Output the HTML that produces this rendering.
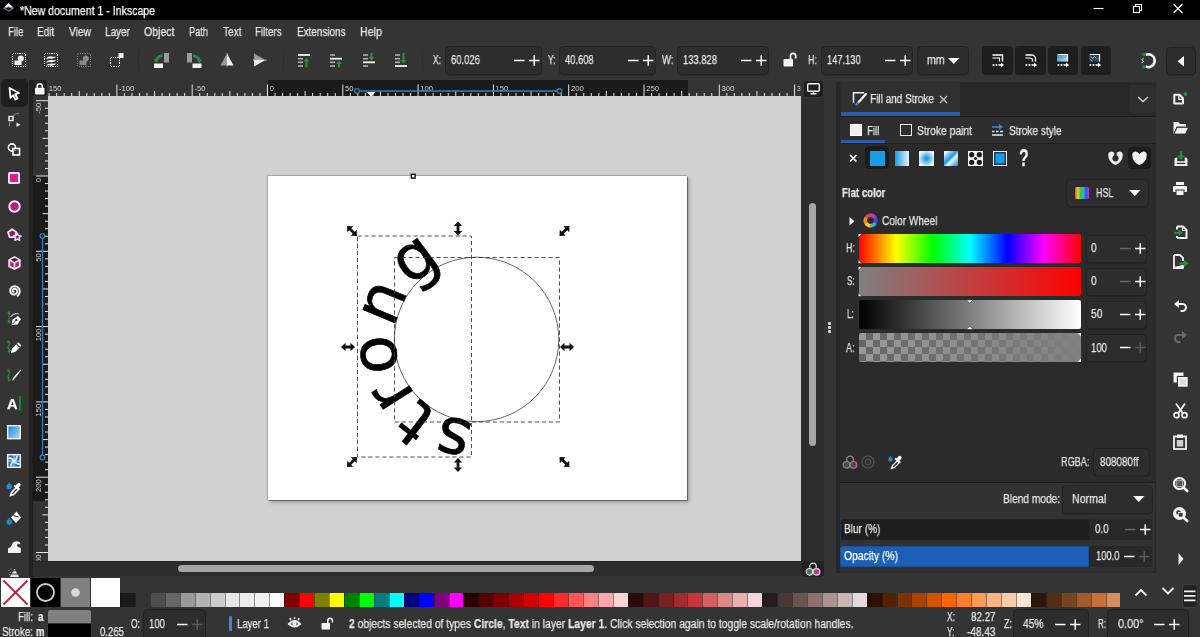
<!DOCTYPE html>
<html><head><meta charset="utf-8"><title>Inkscape</title>
<style>
*{box-sizing:border-box;margin:0;padding:0}
html,body{width:1200px;height:637px;overflow:hidden;background:#343434;font-family:"Liberation Sans",sans-serif;font-size:12px;color:#e8e8e8}
.a{position:absolute}
.t{position:absolute;white-space:nowrap;line-height:14px;font-size:12px;color:#e8e8e8;will-change:transform;-webkit-text-stroke:0.250px}
.box{position:absolute;background:#2d2d2d;border:1px solid #222;border-radius:4.500px;box-shadow:0 1px 0 rgba(0,0,0,.15)}
.dk{position:absolute;background:#1e1e1e;border-radius:4px}
svg{position:absolute;overflow:visible}
b{font-weight:bold}
</style></head><body>

<div class="a" style="left:0;top:0;width:1200px;height:20px;background:#000"></div>
<svg style="left:0px;top:0px" width="18" height="16" viewBox="0 0 18 16" ><path d="M8.500 3.300L14.300 8.300L8.600 11.800L3 8.300Z" fill="#7d7d88"/><path d="M8.500 3.300L12.600 6.800L10.600 7.600L8.500 6.200L6.500 7.600L4.600 6.900Z" fill="#fff"/><path d="M5.500 8.700L8.500 7.300L11.600 8.700L8.600 10.600Z" fill="#14141c"/></svg>
<div class="t" style="left:20.00px;top:3.5px;transform:scaleX(0.8801);transform-origin:0 0;color:#fff;">*New document 1 - Inkscape</div>
<svg style="left:1090px;top:0px" width="100" height="20" viewBox="0 0 100 20" fill="none" stroke="#fff" stroke-width="1.100"><path d="M3.500 8.500h10"/><rect x="43.500" y="6.500" width="6" height="6"/><path d="M45.500 6.500v-2h6v6h-2"/><path d="M83.500 4l9 9M92.500 4l-9 9"/></svg>
<div class="t" style="left:7.50px;top:24.5px;transform:scaleX(0.8010);transform-origin:0 0;">File</div>
<div class="t" style="left:37.00px;top:24.5px;transform:scaleX(0.8357);transform-origin:0 0;">Edit</div>
<div class="t" style="left:68.50px;top:24.5px;transform:scaleX(0.8511);transform-origin:0 0;">View</div>
<div class="t" style="left:104.50px;top:24.5px;transform:scaleX(0.8333);transform-origin:0 0;">Layer</div>
<div class="t" style="left:143.50px;top:24.5px;transform:scaleX(0.8790);transform-origin:0 0;">Object</div>
<div class="t" style="left:188.50px;top:24.5px;transform:scaleX(0.7692);transform-origin:0 0;">Path</div>
<div class="t" style="left:222.50px;top:24.5px;transform:scaleX(0.8409);transform-origin:0 0;">Text</div>
<div class="t" style="left:255.00px;top:24.5px;transform:scaleX(0.8116);transform-origin:0 0;">Filters</div>
<div class="t" style="left:296.50px;top:24.5px;transform:scaleX(0.8262);transform-origin:0 0;">Extensions</div>
<div class="t" style="left:359.50px;top:24.5px;transform:scaleX(0.8907);transform-origin:0 0;">Help</div>
<svg style="left:12px;top:53px" width="14" height="14" viewBox="0 0 14 14" ><rect x="0.5" y="0.5" width="13" height="13" fill="none" stroke="#f2f2f2" stroke-width="1" stroke-dasharray="1.200 1.100" shape-rendering="crispEdges"/><rect x="2.500" y="7.500" width="7" height="4.500" fill="#f2f2f2"/><circle cx="8.800" cy="5.500" r="3" fill="#f2f2f2"/></svg>
<svg style="left:44px;top:53px" width="14" height="14" viewBox="0 0 14 14" ><rect x="0.5" y="0.5" width="13" height="13" fill="none" stroke="#f2f2f2" stroke-width="1" stroke-dasharray="1.200 1.100" shape-rendering="crispEdges"/><path d="M2.500 5 Q5 2.500 8 3.500 T11.500 3 L11.500 4.500 Q9 6 6.500 5.500 T2.500 6.500Z M2.500 8.500 Q5 6.500 8 7 T11.500 6.500 L11.500 8 Q9 9.500 6.500 9 T2.500 10Z M2.500 12 Q5 10 8 10.500 T11.500 10 L11.500 11.500 Q9 13 6.500 12.500 T2.500 12.800Z" fill="#f2f2f2"/></svg>
<svg style="left:77px;top:53px" width="14" height="14" viewBox="0 0 14 14" ><rect x="0.5" y="0.5" width="13" height="13" fill="none" stroke="#7a7a7a" stroke-width="1" stroke-dasharray="1.200 1.100" shape-rendering="crispEdges"/><rect x="2.500" y="7.500" width="7" height="4.500" fill="#8a8a8a"/><circle cx="8.800" cy="5.500" r="3" fill="#8a8a8a"/></svg>
<svg style="left:110px;top:53px" width="14" height="14" viewBox="0 0 14 14" ><rect x="0.5" y="4.5" width="9" height="9" fill="none" stroke="#f2f2f2" stroke-width="1" stroke-dasharray="1.200 1.100" shape-rendering="crispEdges"/><rect x="8.500" y="0" width="5" height="5" fill="#f2f2f2"/></svg>
<svg style="left:153px;top:53px" width="16" height="15" viewBox="0 0 16 15" ><rect x="11" y="0" width="5" height="9.500" fill="#9a9a9a"/><rect x="1" y="10.500" width="9" height="4.500" fill="#f2f2f2"/><path d="M3 8.500 Q3.500 3.500 9.500 2.500" fill="none" stroke="#27903a" stroke-width="2.400"/><path d="M0.500 6.500 L6 6.500 L3 10Z" fill="#27903a"/></svg>
<svg style="left:186px;top:53px" width="16" height="15" viewBox="0 0 16 15" ><rect x="1" y="0" width="5" height="9.500" fill="#9a9a9a"/><rect x="6.500" y="10.500" width="9" height="4.500" fill="#f2f2f2"/><path d="M13.500 8.500 Q13 3.500 7 2.500" fill="none" stroke="#27903a" stroke-width="2.400"/><path d="M16 6.500 L10.500 6.500 L13.500 10Z" fill="#27903a"/></svg>
<svg style="left:220px;top:53px" width="14" height="14" viewBox="0 0 14 14" ><path d="M7 0.500 L0.500 12.500 L7 12.500Z" fill="#9a9a9a"/><path d="M7 0.500 L13.500 12.500 L7 12.500Z" fill="#f2f2f2"/><path d="M7 0v14" stroke="#bbb" stroke-width="1" stroke-dasharray="1.500 1.500"/></svg>
<svg style="left:253px;top:53px" width="14" height="14" viewBox="0 0 14 14" ><path d="M1 0.500 L12.500 7 L1 7Z" fill="#9a9a9a"/><path d="M1 13.500 L12.500 7 L1 7Z" fill="#f2f2f2"/><path d="M0 7h14" stroke="#ccc" stroke-width="1" stroke-dasharray="1.500 1.500"/></svg>
<svg style="left:297.5px;top:53px" width="13" height="15" viewBox="0 0 13 15" ><rect x="0" y="1.1" width="12" height="1.800" fill="#f2f2f2"/><rect x="0" y="4.9" width="5" height="1.600" fill="#b0b0b0"/><rect x="0" y="8.5" width="5" height="1.600" fill="#b0b0b0"/><rect x="0" y="12.2" width="5" height="1.600" fill="#b0b0b0"/><path d="M8.5 14.5V7" stroke="#27903a" stroke-width="2"/><path d="M5.5 8.5L8.5 5L11.5 8.5Z" fill="#27903a"/></svg>
<svg style="left:330px;top:53px" width="13" height="15" viewBox="0 0 13 15" ><rect x="0" y="1.2" width="5" height="1.600" fill="#b0b0b0"/><rect x="0" y="4.8" width="12" height="1.800" fill="#f2f2f2"/><rect x="0" y="8.5" width="5" height="1.600" fill="#b0b0b0"/><rect x="0" y="12.2" width="5" height="1.600" fill="#b0b0b0"/><path d="M9 14.5V9.5" stroke="#27903a" stroke-width="2"/><path d="M6 11.0L9 7.5L12 11.0Z" fill="#27903a"/></svg>
<svg style="left:362.5px;top:53px" width="13" height="15" viewBox="0 0 13 15" ><rect x="0" y="1.2" width="5" height="1.600" fill="#b0b0b0"/><rect x="0" y="4.9" width="5" height="1.600" fill="#b0b0b0"/><rect x="0" y="8.4" width="12" height="1.800" fill="#f2f2f2"/><rect x="0" y="12.2" width="5" height="1.600" fill="#b0b0b0"/><path d="M8.5 0V5.5" stroke="#27903a" stroke-width="2"/><path d="M5.5 4.0L8.5 7.5L11.5 4.0Z" fill="#27903a"/></svg>
<svg style="left:395px;top:53px" width="13" height="15" viewBox="0 0 13 15" ><rect x="0" y="1.2" width="5" height="1.600" fill="#b0b0b0"/><rect x="0" y="4.9" width="5" height="1.600" fill="#b0b0b0"/><rect x="0" y="8.5" width="5" height="1.600" fill="#b0b0b0"/><rect x="0" y="12.1" width="12" height="1.800" fill="#f2f2f2"/><path d="M8.5 0V8.5" stroke="#27903a" stroke-width="2"/><path d="M5.5 7.0L8.5 10.5L11.5 7.0Z" fill="#27903a"/></svg>
<div class="t" style="left:433.00px;top:53px;transform:scaleX(0.7048);transform-origin:0 0;">X:</div>
<div class="box" style="left:445px;top:46px;width:97px;height:29px"></div>
<div class="t" style="left:450.50px;top:53px;transform:scaleX(0.7902);transform-origin:0 0;">60.026</div>
<svg style="left:513.5px;top:55px" width="26" height="11" viewBox="0 0 26 11" ><path d="M0 5.500h10.5" stroke="#fff" stroke-width="1.500"/><path d="M15 5.500h10.5M20.25 0.250v10.5" stroke="#fff" stroke-width="1.500" fill="none"/></svg>
<div class="t" style="left:548.00px;top:53px;transform:scaleX(0.7009);transform-origin:0 0;">Y:</div>
<div class="box" style="left:559px;top:46px;width:97px;height:29px"></div>
<div class="t" style="left:565.00px;top:53px;transform:scaleX(0.7820);transform-origin:0 0;">40.608</div>
<svg style="left:627.5px;top:55px" width="26" height="11" viewBox="0 0 26 11" ><path d="M0 5.500h10.5" stroke="#fff" stroke-width="1.500"/><path d="M15 5.500h10.5M20.25 0.250v10.5" stroke="#fff" stroke-width="1.500" fill="none"/></svg>
<div class="t" style="left:662.00px;top:53px;transform:scaleX(0.7958);transform-origin:0 0;">W:</div>
<div class="box" style="left:677px;top:46px;width:92px;height:29px"></div>
<div class="t" style="left:683.00px;top:53px;transform:scaleX(0.7834);transform-origin:0 0;">133.828</div>
<svg style="left:740.5px;top:55px" width="26" height="11" viewBox="0 0 26 11" ><path d="M0 5.500h10.5" stroke="#fff" stroke-width="1.500"/><path d="M15 5.500h10.5M20.25 0.250v10.5" stroke="#fff" stroke-width="1.500" fill="none"/></svg>
<div class="t" style="left:808.00px;top:53px;transform:scaleX(0.7500);transform-origin:0 0;">H:</div>
<div class="box" style="left:821px;top:46px;width:92px;height:29px"></div>
<div class="t" style="left:827.00px;top:53px;transform:scaleX(0.7765);transform-origin:0 0;">147.130</div>
<svg style="left:884.5px;top:55px" width="26" height="11" viewBox="0 0 26 11" ><path d="M0 5.500h10.5" stroke="#fff" stroke-width="1.500"/><path d="M15 5.500h10.5M20.25 0.250v10.5" stroke="#fff" stroke-width="1.500" fill="none"/></svg>
<svg style="left:783px;top:52px" width="14" height="15" viewBox="0 0 14 15" ><rect x="0.500" y="7" width="9.500" height="7.500" rx="0.800" fill="#f2f2f2"/><path d="M7.500 7V4a2.600 2.600 0 0 1 5.200 0V6.500" fill="none" stroke="#f2f2f2" stroke-width="1.700"/></svg>
<div class="box" style="left:917px;top:46px;width:52px;height:29px"></div>
<div class="t" style="left:927.00px;top:53px;transform:scaleX(0.8750);transform-origin:0 0;">mm</div>
<svg style="left:947.5px;top:57.5px" width="12" height="7" viewBox="0 0 12 7" ><path d="M0 0h11.500l-5.750 6z" fill="#fff"/></svg>
<div class="dk" style="left:982px;top:46px;width:30.500px;height:28.500px"></div>
<div class="dk" style="left:1015px;top:46px;width:30.500px;height:28.500px"></div>
<div class="dk" style="left:1047.5px;top:46px;width:30.500px;height:28.500px"></div>
<div class="dk" style="left:1080.5px;top:46px;width:30.500px;height:28.500px"></div>
<svg style="left:992px;top:54px" width="12" height="14" viewBox="0 0 12 14" ><path d="M0.500 1h10v6.500" fill="none" stroke="#fff" stroke-width="1.400"/><path d="M0.500 4h7v3.500" fill="none" stroke="#fff" stroke-width="1.200"/><circle cx="1.500" cy="11" r="1" fill="#fff"/><circle cx="4.500" cy="11" r="1" fill="#fff"/><path d="M6.500 10.200h2.500v-1.800l3 2.600-3 2.600v-1.800h-2.500z" fill="#fff"/></svg>
<svg style="left:1024.5px;top:54px" width="12" height="14" viewBox="0 0 12 14" ><path d="M0.500 1h6a4 4 0 0 1 4 4v2.500" fill="none" stroke="#fff" stroke-width="1.400"/><path d="M0.500 4h4.500a2.500 2.500 0 0 1 2.500 2.500v1" fill="none" stroke="#fff" stroke-width="1.200"/><circle cx="1.500" cy="11" r="1" fill="#fff"/><circle cx="4.500" cy="11" r="1" fill="#fff"/><path d="M6.500 10.200h2.500v-1.800l3 2.600-3 2.600v-1.800h-2.500z" fill="#fff"/></svg>
<svg style="left:1056.5px;top:54px" width="12" height="14" viewBox="0 0 12 14" ><defs><linearGradient id="tg1" x1="0" y1="0" x2="1" y2="1"><stop offset="0" stop-color="#1a86d8"/><stop offset="1" stop-color="#bfe2f7"/></linearGradient></defs><rect x="0" y="0.500" width="10" height="7" fill="url(#tg1)"/><path d="M1 0.500h9.500v7" fill="none" stroke="#fff" stroke-width="1.200"/><circle cx="1.500" cy="11" r="1" fill="#fff"/><circle cx="4.500" cy="11" r="1" fill="#fff"/><path d="M6.500 10.200h2.500v-1.800l3 2.600-3 2.600v-1.800h-2.500z" fill="#fff"/></svg>
<svg style="left:1089px;top:54px" width="12" height="14" viewBox="0 0 12 14" ><rect x="0" y="0.500" width="10" height="7" fill="#274a66"/><path d="M1.500 2.500l2 2 2-2 2 2M1.500 5.500l2 2" stroke="#9cc4e0" stroke-width="0.900" fill="none"/><path d="M1 0.500h9.500v7" fill="none" stroke="#fff" stroke-width="1.200"/><circle cx="1.500" cy="11" r="1" fill="#fff"/><circle cx="4.500" cy="11" r="1" fill="#fff"/><path d="M6.500 10.200h2.500v-1.800l3 2.600-3 2.600v-1.800h-2.500z" fill="#fff"/></svg>
<svg style="left:1140px;top:53px" width="17" height="16" viewBox="0 0 17 16" ><path d="M5.600 1.900A6.400 6.400 0 1 1 5.600 13.500" fill="none" stroke="#fff" stroke-width="2.500"/><circle cx="3.600" cy="1.600" r="1.800" fill="#218231"/><circle cx="3.600" cy="13.900" r="1.800" fill="#218231"/><path d="M3.600 6c-1.800-.4-2.200 1.300-.9 1.700s.8 2-1.100 1.500" fill="none" stroke="#fff" stroke-width="1"/></svg>
<div class="box" style="left:1165.500px;top:46.500px;width:30.500px;height:28px"></div>
<svg style="left:1177px;top:55.5px" width="8" height="11" viewBox="0 0 8 11" ><path d="M7 0v10.500l-6.500-5.250z" fill="#fff"/></svg>
<div class="a" style="left:138px;top:50px;width:1px;height:21px;background:#2e2e2e"></div>
<div class="a" style="left:282.5px;top:50px;width:1px;height:21px;background:#2e2e2e"></div>
<div class="a" style="left:421.5px;top:50px;width:1px;height:21px;background:#2e2e2e"></div>
<div class="a" style="left:1px;top:79px;width:26.500px;height:27.500px;background:#1e1e1e;border-radius:5px"></div>
<div class="a" style="left:29px;top:79.500px;width:4.500px;height:497.500px;background:#202020"></div>
<svg style="left:8px;top:87px" width="13" height="14" viewBox="0 0 13 14" ><path d="M1.500 1 L11 6 L7.200 7.300 L9.500 11.500 L7.300 12.500 L5.200 8.300 L2.500 10.800Z" fill="#1d1d1d" stroke="#fff" stroke-width="1.800" stroke-linejoin="round"/></svg>
<svg style="left:7px;top:111px" width="14" height="18" viewBox="0 0 14 18" ><rect x="2" y="5.500" width="4" height="4" fill="none" stroke="#fff" stroke-width="1.400"/><path d="M6.500 4.500Q9 2 12 2.500" fill="none" stroke="#aaa" stroke-width="0.800"/><path d="M3 10.500Q2 13 2.500 15.500" fill="none" stroke="#aaa" stroke-width="0.800"/><path d="M9.500 11.500l4 2.300-4 2.300z" fill="#fff"/></svg>
<svg style="left:7px;top:143px" width="14" height="13" viewBox="0 0 14 13" ><circle cx="5" cy="4.500" r="3.600" fill="none" stroke="#fff" stroke-width="1.600"/><rect x="6" y="5.500" width="6.500" height="6.500" fill="#343434" stroke="#fff" stroke-width="1.600"/><path d="M5 4.500l3.500 3.500" stroke="#ccc" stroke-width="1"/></svg>
<svg style="left:8px;top:172px" width="12" height="12" viewBox="0 0 12 12" ><rect x="1" y="1" width="10" height="10" rx="0.800" fill="#e8198b" stroke="#fbe8f2" stroke-width="2"/></svg>
<svg style="left:7.5px;top:199.5px" width="13" height="13" viewBox="0 0 13 13" ><circle cx="6.500" cy="6.500" r="5.200" fill="#c01a78" stroke="#fbe8f2" stroke-width="2"/></svg>
<svg style="left:7px;top:228px" width="15" height="14" viewBox="0 0 15 14" ><path d="M5.200 1.200l4.200 3-1.600 4.900H2.600L1 4.200z" fill="#8e1c60" stroke="#f6e4ee" stroke-width="1.800" stroke-linejoin="round"/><path d="M10.300 5.200l1.100 2.300 2.600.4-1.900 1.800.5 2.600-2.300-1.200-2.300 1.200.5-2.600-1.900-1.800 2.600-.4z" fill="#8e1c60" stroke="#f6e4ee" stroke-width="1.500" stroke-linejoin="round"/></svg>
<svg style="left:7.5px;top:256px" width="13" height="14" viewBox="0 0 13 14" ><path d="M6.500 1.200L11.800 4v6.300L6.500 13 1.200 10.300V4z" fill="#c01a7a" stroke="#f6e4ee" stroke-width="1.900" stroke-linejoin="round"/><path d="M6.500 1.800L11 4.200 6.500 6.800 2 4.200z" fill="#5e1a4c"/><path d="M1.200 4l5.300 2.900L11.800 4M6.500 6.900V13" fill="none" stroke="#f6e4ee" stroke-width="1.600"/></svg>
<svg style="left:7.5px;top:284.5px" width="13" height="13" viewBox="0 0 13 13" ><path d="M5.58 6.96 L5.35 6.86 L5.14 6.71 L4.96 6.50 L4.82 6.26 L4.72 5.97 L4.68 5.66 L4.70 5.33 L4.79 5.00 L4.95 4.68 L5.17 4.39 L5.46 4.14 L5.81 3.94 L6.20 3.81 L6.62 3.75 L7.07 3.78 L7.51 3.89 L7.93 4.10 L8.32 4.39 L8.65 4.76 L8.91 5.20 L9.09 5.70 L9.18 6.23 L9.16 6.79 L9.03 7.34 L8.79 7.88 L8.45 8.37 L8.00 8.79 L7.48 9.13 L6.88 9.37 L6.24 9.50 L5.57 9.50 L4.90 9.37 L4.25 9.11 L3.65 8.73 L3.12 8.23 L2.69 7.62 L2.37 6.94 L2.19 6.19 L2.15 5.40 L2.27 4.61 L2.53 3.84 L2.94 3.12 L3.49 2.49 L4.17 1.95 L4.94 1.55 L5.79 1.30 L6.69 1.21 L7.60 1.30 L8.49 1.55 L9.33 1.98 L10.09 2.57 L10.73 3.30 L11.23 4.15 L11.56 5.09 L11.72 6.09 L11.68 7.12 L11.44 8.14 L11.01 9.11 L10.40 9.99 L9.63 10.75" fill="none" stroke="#f4f4f4" stroke-width="1.900" stroke-linecap="round" stroke-linejoin="round"/></svg>
<svg style="left:6px;top:311px" width="16" height="15" viewBox="0 0 16 15" ><path d="M3 1.500v8.500" stroke="#27903a" stroke-width="1" fill="none"/><circle cx="3" cy="2" r="1.400" fill="#27903a"/><circle cx="3" cy="10.500" r="1.400" fill="#27903a"/><path d="M4.500 6Q8 1.500 13 3" fill="none" stroke="#bbb" stroke-width="1.200"/><path d="M5.500 14l1-5.500 5.500-3.500 3 3-3.500 5.500z" fill="#fff"/><path d="M6 13.500l4-4" stroke="#343434" stroke-width="1"/><circle cx="10.300" cy="9.200" r="1.100" fill="#343434"/></svg>
<svg style="left:6px;top:340px" width="16" height="15" viewBox="0 0 16 15" ><path d="M2 1.500q3 1 1 3.500t0 4.500 3 1" fill="none" stroke="#27903a" stroke-width="1.100"/><circle cx="2.500" cy="1.800" r="1.300" fill="#27903a"/><circle cx="3" cy="11.500" r="1.300" fill="#27903a"/><path d="M4.800 13l1.200-4.300 6.300-6.500 3.200 3.200-6.300 6.500z" fill="#fff"/><path d="M10.500 4l3.200 3.200" stroke="#343434" stroke-width="1.100"/></svg>
<svg style="left:6px;top:368px" width="16" height="15" viewBox="0 0 16 15" ><path d="M2 2.500q3 1 1 3.500t0 4.500" fill="none" stroke="#27903a" stroke-width="1.100"/><circle cx="2.500" cy="2.500" r="1.200" fill="#27903a"/><circle cx="3" cy="12" r="1.300" fill="#27903a"/><path d="M6 13l1.200-3.200 7.300-8.300.8.800-7 8.600z" fill="#fff"/></svg>
<div class="t" style="left:7.00px;top:397.3px;transform:scaleX(1.0495);transform-origin:0 0;font-size:14px;color:#fff;"><b>A</b></div>
<div class="a" style="left:19px;top:395.500px;width:2.200px;height:15px;background:#218231"></div>
<svg style="left:7px;top:425px" width="14" height="15" viewBox="0 0 14 15" ><defs><linearGradient id="lg1" x1="0" y1="0" x2="1" y2="1"><stop offset="0" stop-color="#1583d6"/><stop offset="1" stop-color="#b5dcf5"/></linearGradient></defs><rect x="0.700" y="0.700" width="12.600" height="13" fill="url(#lg1)" stroke="#f0f0f0" stroke-width="1.400"/></svg>
<svg style="left:7px;top:453.5px" width="14" height="14" viewBox="0 0 14 14" ><rect x="0.700" y="0.700" width="12.600" height="12.600" fill="#1d6db3" stroke="#f0f0f0" stroke-width="1.500"/><path d="M7 7Q4 3 1.500 4.500M7 7Q11 4 9.500 1.500M7 7Q10 11 12.500 9.500M7 7Q3 10 4.500 12.500" stroke="#d6ecfa" stroke-width="1.900" fill="none"/><path d="M7 1v12M1 7h12" stroke="#e8f4fc" stroke-width="0.900"/></svg>
<svg style="left:6px;top:481px" width="16" height="16" viewBox="0 0 16 16" ><circle cx="3.300" cy="5.500" r="2.700" fill="#1e8ad6"/><path d="M3.300 1l2 3.500h-4z" fill="#1e8ad6"/><path d="M4.500 14.500l1-3 5.500-5.500 2 2-5.500 5.500z" fill="none" stroke="#fff" stroke-width="1.600"/><path d="M9.500 4.500l2-2a1.800 1.800 0 0 1 2.600 2.600l-2 2 .8.800-1.200 1.200-4.200-4.200 1.200-1.200z" fill="#fff"/></svg>
<svg style="left:6px;top:510px" width="16" height="15" viewBox="0 0 16 15" ><circle cx="3.200" cy="12" r="2.700" fill="#1e8ad6"/><path d="M3.200 7.500l2 3.500h-4z" fill="#1e8ad6"/><path d="M5 7.500l5.500-6 4.500 6-5 5.500z" fill="#fff"/><path d="M7.500 5.500l5 1.500" stroke="#343434" stroke-width="1.200"/></svg>
<svg style="left:7.5px;top:540.5px" width="13" height="12" viewBox="0 0 13 12" ><path d="M0 12V7.200c2.800-.2 3.300-2.400 4.500-4.700C5.600.6 8.500-.4 10.800.8c1.200.6 1.700 1.700 1.800 2.800-1-1-2.600-1-3.300 0-.6.900-.1 2 .8 2.400.9.500 1.900.4 2.700.9V12z" fill="#f2f2f2"/></svg>
<svg style="left:8px;top:568px" width="13" height="9" viewBox="0 0 13 9" ><path d="M2 9L3 6.500h7L11 9z" fill="#eee"/><path d="M4 5.500l1-2h3l1 2z" fill="#eee"/><path d="M5.500 2.500l.5-1.500h1l.5 1.500z" fill="#eee"/><circle cx="1" cy="2.500" r=".6" fill="#aaa"/><circle cx="2.500" cy="4.500" r=".6" fill="#aaa"/><circle cx="1.500" cy="6.500" r=".6" fill="#aaa"/><circle cx="3" cy="1" r=".6" fill="#aaa"/></svg>
<div class="a" style="left:33px;top:79.500px;width:768px;height:16.500px;background:#343434"></div>
<div class="a" style="left:31px;top:79.500px;width:16px;height:16.500px;background:#222;border-radius:3px"></div>
<div class="a" style="left:267.500px;top:79.500px;width:420px;height:16.500px;background:#1a1a1a"></div>
<div class="a" style="left:33px;top:96px;width:15px;height:465px;background:#343434"></div>
<div class="a" style="left:33px;top:176px;width:15px;height:324.500px;background:#1a1a1a"></div>
<svg style="left:34.5px;top:82.5px" width="10" height="12" viewBox="0 0 10 12" ><rect x="0" y="4.800" width="9.500" height="6.700" rx="0.800" fill="#f4f4f4"/><path d="M2.200 5V3.300a2.550 2.550 0 0 1 5.100 0V5" fill="none" stroke="#f4f4f4" stroke-width="1.600"/></svg>
<svg style="left:0px;top:0px" width="1200" height="637" viewBox="0 0 1200 637" ><path d="M49.13 93V96M56.66 93V96M64.19 93V96M71.72 93V96M79.25 91V96M86.78 93V96M94.31 93V96M101.84 93V96M109.37 93V96M116.90 84.500V96M124.43 93V96M131.96 93V96M139.49 93V96M147.02 93V96M154.55 91V96M162.08 93V96M169.61 93V96M177.14 93V96M184.67 93V96M192.20 84.500V96M199.73 93V96M207.26 93V96M214.79 93V96M222.32 93V96M229.85 91V96M237.38 93V96M244.91 93V96M252.44 93V96M259.97 93V96M267.50 84.500V96M275.03 93V96M282.56 93V96M290.09 93V96M297.62 93V96M305.15 91V96M312.68 93V96M320.21 93V96M327.74 93V96M335.27 93V96M342.80 84.500V96M350.33 93V96M357.86 93V96M365.39 93V96M372.92 93V96M380.45 91V96M387.98 93V96M395.51 93V96M403.04 93V96M410.57 93V96M418.10 84.500V96M425.63 93V96M433.16 93V96M440.69 93V96M448.22 93V96M455.75 91V96M463.28 93V96M470.81 93V96M478.34 93V96M485.87 93V96M493.40 84.500V96M500.93 93V96M508.46 93V96M515.99 93V96M523.52 93V96M531.05 91V96M538.58 93V96M546.11 93V96M553.64 93V96M561.17 93V96M568.70 84.500V96M576.23 93V96M583.76 93V96M591.29 93V96M598.82 93V96M606.35 91V96M613.88 93V96M621.41 93V96M628.94 93V96M636.47 93V96M644.00 84.500V96M651.53 93V96M659.06 93V96M666.59 93V96M674.12 93V96M681.65 91V96M689.18 93V96M696.71 93V96M704.24 93V96M711.77 93V96M719.30 84.500V96M726.83 93V96M734.36 93V96M741.89 93V96M749.42 93V96M756.95 91V96M764.48 93V96M772.01 93V96M779.54 93V96M787.07 93V96M794.60 84.500V96" stroke="#e6e6e6" stroke-width="1" fill="none"/><clipPath id="hrc"><rect x="48" y="80" width="752.500" height="16"/></clipPath><g clip-path="url(#hrc)" font-family="Liberation Sans, sans-serif" font-size="8" fill="#d6d6d6"><text x="119.10" y="91.300" textLength="15.2" lengthAdjust="spacingAndGlyphs">-100</text><text x="194.40" y="91.300" textLength="11.0" lengthAdjust="spacingAndGlyphs">-50</text><text x="269.70" y="91.300" textLength="4.2" lengthAdjust="spacingAndGlyphs">0</text><text x="345.00" y="91.300" textLength="8.5" lengthAdjust="spacingAndGlyphs">50</text><text x="420.30" y="91.300" textLength="12.8" lengthAdjust="spacingAndGlyphs">100</text><text x="495.60" y="91.300" textLength="12.8" lengthAdjust="spacingAndGlyphs">150</text><text x="570.90" y="91.300" textLength="12.8" lengthAdjust="spacingAndGlyphs">200</text><text x="646.20" y="91.300" textLength="12.8" lengthAdjust="spacingAndGlyphs">250</text><text x="721.50" y="91.300" textLength="12.8" lengthAdjust="spacingAndGlyphs">300</text><text x="796.80" y="91.300" textLength="12.8" lengthAdjust="spacingAndGlyphs">350</text><text x="48.800" y="91.300" textLength="12.7" lengthAdjust="spacingAndGlyphs">150</text></g></svg>
<svg style="left:0px;top:0px" width="1200" height="637" viewBox="0 0 1200 637" ><path d="M36 100.70H48M45 108.23H48M45 115.76H48M45 123.29H48M45 130.82H48M42.500 138.35H48M45 145.88H48M45 153.41H48M45 160.94H48M45 168.47H48M36 176.00H48M45 183.53H48M45 191.06H48M45 198.59H48M45 206.12H48M42.500 213.65H48M45 221.18H48M45 228.71H48M45 236.24H48M45 243.77H48M36 251.30H48M45 258.83H48M45 266.36H48M45 273.89H48M45 281.42H48M42.500 288.95H48M45 296.48H48M45 304.01H48M45 311.54H48M45 319.07H48M36 326.60H48M45 334.13H48M45 341.66H48M45 349.19H48M45 356.72H48M42.500 364.25H48M45 371.78H48M45 379.31H48M45 386.84H48M45 394.37H48M36 401.90H48M45 409.43H48M45 416.96H48M45 424.49H48M45 432.02H48M42.500 439.55H48M45 447.08H48M45 454.61H48M45 462.14H48M45 469.67H48M36 477.20H48M45 484.73H48M45 492.26H48M45 499.79H48M45 507.32H48M42.500 514.85H48M45 522.38H48M45 529.91H48M45 537.44H48M45 544.97H48M36 552.50H48" stroke="#e6e6e6" stroke-width="1" fill="none"/><clipPath id="vrc"><rect x="33" y="96" width="15" height="464.500"/></clipPath><g clip-path="url(#vrc)" font-family="Liberation Sans, sans-serif" font-size="8" fill="#d6d6d6"><text transform="translate(40.800 113.70) rotate(-90)" textLength="11.0" lengthAdjust="spacingAndGlyphs">-50</text><text transform="translate(40.800 182.25) rotate(-90)" textLength="4.2" lengthAdjust="spacingAndGlyphs">0</text><text transform="translate(40.800 261.80) rotate(-90)" textLength="8.5" lengthAdjust="spacingAndGlyphs">50</text><text transform="translate(40.800 341.35) rotate(-90)" textLength="12.8" lengthAdjust="spacingAndGlyphs">100</text><text transform="translate(40.800 416.65) rotate(-90)" textLength="12.8" lengthAdjust="spacingAndGlyphs">150</text><text transform="translate(40.800 491.95) rotate(-90)" textLength="12.8" lengthAdjust="spacingAndGlyphs">200</text><text transform="translate(40.800 567.25) rotate(-90)" textLength="12.8" lengthAdjust="spacingAndGlyphs">250</text></g></svg>
<svg style="left:0px;top:0px" width="1200" height="637" viewBox="0 0 1200 637" ><path d="M359.500 91H557" stroke="#3280bb" stroke-width="1.300"/><circle cx="357" cy="91" r="2.300" fill="#1a1a1a" stroke="#3280bb" stroke-width="1.300"/><circle cx="559.500" cy="91" r="2.300" fill="#1a1a1a" stroke="#3280bb" stroke-width="1.300"/><path d="M366.500 92h9l-4.500 4.500z" fill="#fff"/></svg>
<svg style="left:0px;top:0px" width="1200" height="637" viewBox="0 0 1200 637" ><path d="M42.500 238V455.500" stroke="#3280bb" stroke-width="1.300"/><circle cx="42.500" cy="236" r="2.300" fill="#1a1a1a" stroke="#3280bb" stroke-width="1.300"/><circle cx="42.500" cy="457.500" r="2.300" fill="#1a1a1a" stroke="#3280bb" stroke-width="1.300"/></svg>
<div class="a" style="left:48px;top:96px;width:753px;height:465px;background:#d1d1d1"></div>
<div class="a" style="left:268px;top:176px;width:419px;height:323.800px;background:#fff;box-shadow:0.800px 0.800px 0 rgba(70,70,70,.85),-0.700px -0.700px 0 rgba(130,130,130,.7),2px 2px 4px rgba(0,0,0,.3)"></div>
<svg style="left:0px;top:0px" width="1200" height="637" viewBox="0 0 1200 637" ><circle cx="476.6" cy="339.4" r="82.2" fill="none" stroke="#222" stroke-width="0.700"/><path id="cp" d="M474.45 421.57A82.2 82.2 0 0 1 478.75 257.23A82.2 82.2 0 0 1 474.45 421.57" fill="none"/><text font-family="DejaVu Sans, sans-serif" font-size="63.500" letter-spacing="3.700" fill="#000" stroke="#000" stroke-width="0.700"><textPath href="#cp" startOffset="0">strong</textPath></text><g fill="none" stroke="#3a3a55" stroke-width="0.900" stroke-dasharray="4.200 2.800"><rect x="357.500" y="236" width="114" height="221"/><rect x="394.500" y="257.500" width="165" height="164.500"/></g><g transform="translate(352 231) rotate(45)"><path d="M-7 0l4.500-4.200v2.800h5v-2.800l4.500 4.200-4.500 4.200v-2.800h-5v2.800z" fill="#111"/></g><g transform="translate(564.5 231) rotate(-45)"><path d="M-7 0l4.500-4.200v2.800h5v-2.800l4.500 4.200-4.500 4.200v-2.800h-5v2.800z" fill="#111"/></g><g transform="translate(352 462) rotate(-45)"><path d="M-7 0l4.500-4.200v2.800h5v-2.800l4.500 4.200-4.500 4.200v-2.800h-5v2.800z" fill="#111"/></g><g transform="translate(564.5 462) rotate(45)"><path d="M-7 0l4.500-4.200v2.800h5v-2.800l4.500 4.200-4.500 4.200v-2.800h-5v2.800z" fill="#111"/></g><g transform="translate(458 228.5) rotate(90)"><path d="M-7 0l4.500-4.200v2.800h5v-2.800l4.500 4.200-4.500 4.200v-2.800h-5v2.800z" fill="#111"/></g><g transform="translate(458 465) rotate(90)"><path d="M-7 0l4.500-4.200v2.800h5v-2.800l4.500 4.200-4.500 4.200v-2.800h-5v2.800z" fill="#111"/></g><g transform="translate(348 347) rotate(0)"><path d="M-7 0l4.500-4.200v2.800h5v-2.800l4.500 4.200-4.500 4.200v-2.800h-5v2.800z" fill="#111"/></g><g transform="translate(567 347) rotate(0)"><path d="M-7 0l4.500-4.200v2.800h5v-2.800l4.500 4.200-4.500 4.200v-2.800h-5v2.800z" fill="#111"/></g><rect x="411.300" y="174.300" width="3.800" height="3.800" fill="#fff" stroke="#111" stroke-width="1.400"/></svg>
<div class="a" style="left:801px;top:96px;width:22.500px;height:480px;background:#2d2d2d"></div>
<div class="a" style="left:33px;top:560.500px;width:790.500px;height:15.500px;background:#2d2d2d;border-top:1px solid #222"></div>
<div class="a" style="left:809px;top:203px;width:7px;height:243px;background:#a6a6a6;border-radius:3.500px"></div>
<div class="a" style="left:178px;top:565px;width:416px;height:7px;background:#a6a6a6;border-radius:3.500px"></div>
<div class="a" style="left:802.500px;top:80px;width:21px;height:18px;background:#1f1f1f;border:1px solid #383838;border-radius:4px"></div>
<svg style="left:806.5px;top:83px" width="13" height="12" viewBox="0 0 13 12" ><rect x="0.700" y="0.700" width="11.600" height="7.600" rx="1" fill="none" stroke="#f0f0f0" stroke-width="1.400"/><path d="M6.500 8.500v1.500M3.500 10.800h6" stroke="#f0f0f0" stroke-width="1.400"/></svg>
<div class="a" style="left:828px;top:322px;width:2.500px;height:2.500px;background:#ddd;border-radius:50%"></div>
<div class="a" style="left:828px;top:326px;width:2.500px;height:2.500px;background:#ddd;border-radius:50%"></div>
<div class="a" style="left:828px;top:330.2px;width:2.500px;height:2.500px;background:#ddd;border-radius:50%"></div>
<div class="a" style="left:801.500px;top:560.500px;width:22px;height:16px;background:#222;border-radius:4px"></div>
<svg style="left:804.5px;top:562px" width="16" height="14" viewBox="0 0 16 14" ><g opacity="1.0"><circle cx="8" cy="4.500" r="3.300" fill="none" stroke="#ddd" stroke-width="1.200"/><circle cx="4.500" cy="9.800" r="3.300" fill="#2f8a3c" stroke="#ddd" stroke-width="1.200"/><circle cx="11.500" cy="9.800" r="3.300" fill="#c2357f" stroke="#ddd" stroke-width="1.200"/></g></svg>
<div class="a" style="left:836px;top:82px;width:320px;height:491px;background:#2b2b2b"></div>
<div class="a" style="left:836px;top:82px;width:4px;height:491px;background:#262626"></div>
<div class="a" style="left:841px;top:83px;width:119px;height:29px;background:#303030"></div>
<div class="a" style="left:841px;top:112px;width:119px;height:3.500px;background:#2a5da8"></div>
<div class="a" style="left:840px;top:116px;width:316px;height:1px;background:#1c1c1c"></div>
<svg style="left:852px;top:92px" width="15" height="15" viewBox="0 0 15 15" ><path d="M1.500 10.700V0.800h10.500" fill="none" stroke="#f0f0f0" stroke-width="1.500"/><path d="M13.800 2l-6 7" stroke="#f4f4f4" stroke-width="2.300" stroke-linecap="round"/><path d="M6.800 9.800l-2.300 2.600" stroke="#3c8ed0" stroke-width="2.300" stroke-linecap="round"/><circle cx="6.900" cy="9.700" r="1.100" fill="#fff"/></svg>
<div class="t" style="left:869.50px;top:91.5px;transform:scaleX(0.8344);transform-origin:0 0;">Fill and Stroke</div>
<svg style="left:938.5px;top:95px" width="9" height="9" viewBox="0 0 9 9" ><path d="M1 1l7 7M8 1l-7 7" stroke="#bdbdbd" stroke-width="1.400"/></svg>
<div class="a" style="left:960px;top:83px;width:196px;height:33px;background:#282828"></div>
<div class="a" style="left:1130px;top:85px;width:25.500px;height:28px;background:#2f2f2f;border-radius:4px"></div>
<svg style="left:1137px;top:96px" width="12" height="7" viewBox="0 0 12 7" ><path d="M1 1l5 4.500 5-4.500" fill="none" stroke="#cfcfcf" stroke-width="1.500"/></svg>
<div class="a" style="left:840px;top:117px;width:316px;height:26px;background:#2e2e2e"></div>
<div class="a" style="left:841px;top:139.500px;width:44px;height:3.500px;background:#2a5da8"></div>
<div class="a" style="left:840px;top:143px;width:316px;height:1px;background:#1f1f1f"></div>
<div class="a" style="left:850px;top:124px;width:11.500px;height:12px;background:#efefef;border:1px solid #fff"></div>
<div class="t" style="left:867.00px;top:123.5px;transform:scaleX(0.8013);transform-origin:0 0;">Fill</div>
<div class="a" style="left:900px;top:124px;width:11.500px;height:12px;border:1.500px solid #e8e8e8"></div>
<div class="t" style="left:917.00px;top:123.5px;transform:scaleX(0.8587);transform-origin:0 0;">Stroke paint</div>
<svg style="left:992px;top:124px" width="12" height="12" viewBox="0 0 12 12" ><path d="M0 3h8" stroke="#3c8ed0" stroke-width="1.500"/><path d="M7 0l4 3-4 3z" fill="#3c8ed0"/><path d="M0 7.500h2.500M4 7.500h2.500M8 7.500h3" stroke="#ddd" stroke-width="1.400"/><path d="M0 11h11" stroke="#ddd" stroke-width="1.600"/></svg>
<div class="t" style="left:1008.70px;top:123.5px;transform:scaleX(0.8389);transform-origin:0 0;">Stroke style</div>
<svg style="left:848.5px;top:153.5px" width="9" height="9" viewBox="0 0 9 9" ><path d="M1 1l6.500 6.500M7.500 1l-6.500 6.500" stroke="#eee" stroke-width="1.700"/></svg>
<div class="a" style="left:865px;top:146px;width:23.500px;height:22.500px;background:#1b1b1b;border-radius:4px"></div>
<div class="a" style="left:870px;top:151px;width:14.500px;height:14.500px;background:#1a9be6"></div>
<div class="a" style="left:894.500px;top:151px;width:14.500px;height:14.500px;background:linear-gradient(90deg,#1a9be6,#e6f4fd)"></div>
<div class="a" style="left:919px;top:151px;width:14.500px;height:14.500px;background:radial-gradient(circle,#1a9be6 10%,#e6f4fd 75%)"></div>
<div class="a" style="left:943.500px;top:151px;width:14.500px;height:14.500px;background:linear-gradient(135deg,#e6f4fd 10%,#1a9be6 45%,#e6f4fd 60%,#1a9be6 95%)"></div>
<svg style="left:968px;top:151px" width="15" height="15" viewBox="0 0 15 15" ><rect width="15" height="15" fill="#f4f4f4"/><g fill="#1b1b1b"><circle cx="3.700" cy="3.700" r="2.600"/><circle cx="11.300" cy="3.700" r="2.600"/><circle cx="3.700" cy="11.300" r="2.600"/><circle cx="11.300" cy="11.300" r="2.600"/><circle cx="7.500" cy="7.500" r="1.600"/></g></svg>
<div class="a" style="left:992.500px;top:151px;width:14.500px;height:14.500px;background:#1a9be6;border:1.500px solid #f0f0f0;box-shadow:inset 0 0 0 1.500px #1b3a57"></div>
<div class="t" style="left:1018.70px;top:151px;transform:scaleX(0.6553);transform-origin:0 0;font-size:24px;color:#f2f2f2;"><b>?</b></div>
<svg style="left:1107.5px;top:151px" width="15" height="15" viewBox="0 0 15 15" ><path d="M7.500 14C3 12.500 0 8.500 0.300 3.500 0.500 0.800 3.500-.3 5.500 1.200L7.500 3l2-1.800C11.500-.3 14.500.8 14.700 3.500 15 8.500 12 12.500 7.500 14z" fill="#efefef"/><circle cx="7.500" cy="7.300" r="3.100" fill="#2b2b2b"/><path d="M6.300 1.500h2.400v3.500h-2.400z" fill="#2b2b2b"/></svg>
<div class="a" style="left:1127.500px;top:146.500px;width:23.500px;height:22.500px;background:#1b1b1b;border-radius:4px"></div>
<svg style="left:1132px;top:151px" width="15" height="15" viewBox="0 0 15 15" ><path d="M7.500 14C3 12.500 0 8.500 0.300 3.500 0.500 0.800 3.500-.3 5.500 1.200L7.500 3l2-1.800C11.500-.3 14.500.8 14.700 3.500 15 8.500 12 12.500 7.500 14z" fill="#efefef"/></svg>
<div class="t" style="left:842.30px;top:186px;transform:scaleX(0.8037);transform-origin:0 0;"><b>Flat color</b></div>
<div class="box" style="left:1065.500px;top:179px;width:83.500px;height:28px"></div>
<svg style="left:1075px;top:187px" width="14" height="12" viewBox="0 0 14 12" ><defs><linearGradient id="rb" x1="0" x2="1"><stop offset="0" stop-color="#e8452e"/><stop offset=".2" stop-color="#f2d21c"/><stop offset=".4" stop-color="#3fc23a"/><stop offset=".6" stop-color="#22b8e0"/><stop offset=".8" stop-color="#3a48e0"/><stop offset="1" stop-color="#d236d8"/></linearGradient></defs><rect width="14" height="12" rx="1.500" fill="url(#rb)"/></svg>
<div class="t" style="left:1095.50px;top:186.3px;transform:scaleX(0.7495);transform-origin:0 0;">HSL</div>
<svg style="left:1129px;top:190px" width="12" height="7" viewBox="0 0 12 7" ><path d="M0 0h11.500l-5.750 6z" fill="#fff"/></svg>
<svg style="left:849px;top:216.5px" width="6" height="9" viewBox="0 0 6 9" ><path d="M0.500 0l5 4.300-5 4.300z" fill="#f2f2f2"/></svg>
<svg style="left:862.5px;top:213px" width="15" height="15" viewBox="0 0 15 15" ><circle cx="7.500" cy="7.500" r="5.200" fill="none" stroke="#e8452e" stroke-width="3.400"/><path d="M7.500 2.300a5.200 5.200 0 0 1 4.500 2.600" fill="none" stroke="#c236c8" stroke-width="3.400"/><path d="M12 4.900a5.200 5.200 0 0 1 0 5.200" fill="none" stroke="#3a48e0" stroke-width="3.400"/><path d="M12 10.100a5.200 5.200 0 0 1-4.500 2.600" fill="none" stroke="#22b8e0" stroke-width="3.400"/><path d="M7.500 12.700a5.200 5.200 0 0 1-4.500-2.600" fill="none" stroke="#f2d21c" stroke-width="3.400"/><path d="M3 10.100a5.200 5.200 0 0 1 0-5.200" fill="none" stroke="#f28a1c" stroke-width="3.400"/></svg>
<div class="t" style="left:882.30px;top:214px;transform:scaleX(0.8388);transform-origin:0 0;">Color Wheel</div>
<div class="t" style="left:845.70px;top:241.3px;transform:scaleX(0.7500);transform-origin:0 0;">H:</div>
<div class="a" style="left:858.5px;top:233.8px;width:222.5px;height:29.700px;background:linear-gradient(90deg,#f00,#ff0 16.670%,#0f0 33.330%,#0ff 50%,#00f 66.670%,#f0f 83.330%,#f00);border-radius:2px"></div>
<div class="box" style="left:1085.500px;top:234.60000000000002px;width:61.500px;height:28.200px"></div>
<div class="t" style="left:1091.30px;top:241.3px;transform:scaleX(0.8571);transform-origin:0 0;">0</div>
<svg style="left:1120px;top:242.8px" width="26" height="11" viewBox="0 0 26 11" ><path d="M0 5.500h10.5" stroke="#6a6a6a" stroke-width="1.500"/><path d="M15 5.500h10.5M20.25 0.250v10.5" stroke="#fff" stroke-width="1.500" fill="none"/></svg>
<svg style="left:0px;top:0px" width="1200" height="637" viewBox="0 0 1200 637" ><clipPath id="sc233"><rect x="858.5" y="233.8" width="222.5" height="29.700"/></clipPath><g clip-path="url(#sc233)"><path d="M855.0 233.8h7l-3.500 3.500z" fill="#fff" stroke="#222" stroke-width=".6"/><path d="M855.0 263.5h7l-3.500-3.500z" fill="#fff" stroke="#222" stroke-width=".6"/></g></svg>
<div class="t" style="left:846.50px;top:274.3px;transform:scaleX(0.6608);transform-origin:0 0;">S:</div>
<div class="a" style="left:858.5px;top:266.8px;width:222.5px;height:29.700px;background:linear-gradient(90deg,#808080,#ff0000);border-radius:2px"></div>
<div class="box" style="left:1085.500px;top:267.6px;width:61.500px;height:28.200px"></div>
<div class="t" style="left:1091.30px;top:274.3px;transform:scaleX(0.8571);transform-origin:0 0;">0</div>
<svg style="left:1120px;top:275.8px" width="26" height="11" viewBox="0 0 26 11" ><path d="M0 5.500h10.5" stroke="#6a6a6a" stroke-width="1.500"/><path d="M15 5.500h10.5M20.25 0.250v10.5" stroke="#fff" stroke-width="1.500" fill="none"/></svg>
<svg style="left:0px;top:0px" width="1200" height="637" viewBox="0 0 1200 637" ><clipPath id="sc266"><rect x="858.5" y="266.8" width="222.5" height="29.700"/></clipPath><g clip-path="url(#sc266)"><path d="M855.0 266.8h7l-3.500 3.500z" fill="#fff" stroke="#222" stroke-width=".6"/><path d="M855.0 296.5h7l-3.500-3.500z" fill="#fff" stroke="#222" stroke-width=".6"/></g></svg>
<div class="t" style="left:846.50px;top:307.3px;transform:scaleX(0.6500);transform-origin:0 0;">L:</div>
<div class="a" style="left:858.5px;top:299.8px;width:222.5px;height:29.700px;background:linear-gradient(90deg,#000,#808080 50%,#fff);border-radius:2px"></div>
<div class="box" style="left:1085.500px;top:300.6px;width:61.500px;height:28.200px"></div>
<div class="t" style="left:1091.00px;top:307.3px;transform:scaleX(0.8614);transform-origin:0 0;">50</div>
<svg style="left:1120px;top:308.8px" width="26" height="11" viewBox="0 0 26 11" ><path d="M0 5.500h10.5" stroke="#fff" stroke-width="1.500"/><path d="M15 5.500h10.5M20.25 0.250v10.5" stroke="#fff" stroke-width="1.500" fill="none"/></svg>
<svg style="left:0px;top:0px" width="1200" height="637" viewBox="0 0 1200 637" ><clipPath id="sc299"><rect x="858.5" y="299.8" width="222.5" height="29.700"/></clipPath><g clip-path="url(#sc299)"><path d="M966.25 299.8h7l-3.500 3.500z" fill="#fff" stroke="#222" stroke-width=".6"/><path d="M966.25 329.5h7l-3.500-3.500z" fill="#fff" stroke="#222" stroke-width=".6"/></g></svg>
<div class="t" style="left:846.00px;top:340.5px;transform:scaleX(0.7489);transform-origin:0 0;">A:</div>
<div class="a" style="left:858.5px;top:332.800px;width:222.5px;height:29.700px;background:repeating-conic-gradient(#666 0% 25%,#999 0% 50%) 0 0/14px 14px;border-radius:2px"></div>
<div class="a" style="left:858.5px;top:332.800px;width:222.5px;height:29.700px;background:linear-gradient(90deg,rgba(128,128,128,0),rgba(128,128,128,1));border-radius:2px"></div>
<div class="box" style="left:1085.500px;top:333.600px;width:61.500px;height:28.200px"></div>
<div class="t" style="left:1091.00px;top:340.5px;transform:scaleX(0.8000);transform-origin:0 0;">100</div>
<svg style="left:1120px;top:342px" width="26" height="11" viewBox="0 0 26 11" ><path d="M0 5.500h10.5" stroke="#fff" stroke-width="1.500"/><path d="M15 5.500h10.5M20.25 0.250v10.5" stroke="#5a5a5a" stroke-width="1.500" fill="none"/></svg>
<svg style="left:0px;top:0px" width="1200" height="637" viewBox="0 0 1200 637" ><path d="M1077.500 333h3.500v3.500z" fill="#fff"/><path d="M1077.500 362h3.500v-3.500z" fill="#fff"/></svg>
<svg style="left:842px;top:454.5px" width="16" height="14" viewBox="0 0 16 14" ><g opacity="0.55"><circle cx="8" cy="4.500" r="3.300" fill="none" stroke="#ddd" stroke-width="1.200"/><circle cx="4.500" cy="9.800" r="3.300" fill="#2f8a3c" stroke="#ddd" stroke-width="1.200"/><circle cx="11.500" cy="9.800" r="3.300" fill="#c2357f" stroke="#ddd" stroke-width="1.200"/></g></svg>
<svg style="left:861px;top:455px" width="14" height="14" viewBox="0 0 14 14" ><circle cx="7" cy="7" r="6" fill="none" stroke="#555" stroke-width="1.200"/><circle cx="7" cy="7" r="2.600" fill="none" stroke="#555" stroke-width="1.200"/></svg>
<svg style="left:887px;top:454px" width="16" height="16" viewBox="0 0 16 16" ><circle cx="3.500" cy="5.500" r="2.300" fill="#1e8ad6"/><path d="M3.500 1.500l1.500 3h-3z" fill="#1e8ad6"/><path d="M4.500 14.500l1-3 5.500-5.500 2 2-5.500 5.500z" fill="none" stroke="#fff" stroke-width="1.300"/><path d="M9.500 4.500l2-2a1.800 1.800 0 0 1 2.600 2.600l-2 2 .8.800-1.200 1.200-4.200-4.200 1.200-1.200z" fill="#fff"/></svg>
<div class="t" style="left:1061.40px;top:454.5px;transform:scaleX(0.7604);transform-origin:0 0;">RGBA:</div>
<div class="box" style="left:1092.500px;top:447.500px;width:57px;height:28px"></div>
<div class="t" style="left:1100.00px;top:454.5px;transform:scaleX(0.8249);transform-origin:0 0;">808080ff</div>
<div class="a" style="left:840px;top:481.500px;width:316px;height:1px;background:#1c1c1c"></div>
<div class="a" style="left:840px;top:482.500px;width:316px;height:89.500px;background:#323232;border-right:1.500px solid #282828;border-bottom:1.500px solid #282828"></div>
<div class="t" style="left:1003.40px;top:492px;transform:scaleX(0.8487);transform-origin:0 0;">Blend mode:</div>
<div class="box" style="left:1062px;top:485px;width:91px;height:28.500px"></div>
<div class="t" style="left:1071.70px;top:492px;transform:scaleX(0.8875);transform-origin:0 0;">Normal</div>
<svg style="left:1133px;top:496px" width="12" height="7" viewBox="0 0 12 7" ><path d="M0 0h11.500l-5.750 6z" fill="#fff"/></svg>
<div class="a" style="left:840px;top:518.500px;width:311.500px;height:21.500px;background:#282828;border-radius:3px"></div>
<div class="a" style="left:840px;top:518.500px;width:249px;height:21.500px;background:#1f1f1f;border-radius:3px 0 0 3px;border-left:1.500px solid #173a6b"></div>
<div class="t" style="left:843.60px;top:522px;transform:scaleX(0.8397);transform-origin:0 0;">Blur (%)</div>
<div class="t" style="left:1095.00px;top:522px;transform:scaleX(0.8204);transform-origin:0 0;">0.0</div>
<svg style="left:1125px;top:523.5px" width="26" height="11" viewBox="0 0 26 11" ><path d="M0 5.500h10.5" stroke="#6a6a6a" stroke-width="1.500"/><path d="M15 5.500h10.5M20.25 0.250v10.5" stroke="#fff" stroke-width="1.500" fill="none"/></svg>
<div class="a" style="left:840px;top:545.500px;width:311.500px;height:21px;background:#282828;border-radius:3px"></div>
<div class="a" style="left:840px;top:545.500px;width:248.500px;height:21px;background:#1c5fb4;border-radius:3px 0 0 3px;box-shadow:inset 0 0 0 1px #174e96"></div>
<div class="t" style="left:843.60px;top:549px;transform:scaleX(0.8612);transform-origin:0 0;color:#fff;">Opacity (%)</div>
<div class="t" style="left:1096.00px;top:549px;transform:scaleX(0.7820);transform-origin:0 0;">100.0</div>
<svg style="left:1124px;top:550.5px" width="26" height="11" viewBox="0 0 26 11" ><path d="M0 5.500h10.5" stroke="#fff" stroke-width="1.500"/><path d="M15 5.500h10.5M20.25 0.250v10.5" stroke="#5a5a5a" stroke-width="1.500" fill="none"/></svg>
<svg style="left:1173px;top:92.5px" width="14" height="12" viewBox="0 0 14 12" ><path d="M1.300 1.800h5.200l3.500 3.500v5.200h-8.700z" fill="none" stroke="#f2f2f2" stroke-width="2" stroke-linejoin="round"/><path d="M5.800 2.300v4h4" fill="none" stroke="#f2f2f2" stroke-width="1.300"/><circle cx="12.300" cy="1" r="1.900" fill="#27903a"/></svg>
<svg style="left:1173px;top:120.5px" width="16" height="14" viewBox="0 0 16 14" ><path d="M0.500 13V1h5l1.500 2h6v2.500h-9.500l-3 7.500" fill="#f2f2f2"/><path d="M4.200 6.500h11.300l-3 6.500h-11.500z" fill="#f2f2f2" stroke="#343434" stroke-width=".8"/></svg>
<svg style="left:1173px;top:151px" width="15" height="15" viewBox="0 0 15 15" ><path d="M8 0v5.500" stroke="#27903a" stroke-width="2.200"/><path d="M4 4.500h8l-4 4.200z" fill="#27903a"/><path d="M1.500 15v-6.500q0-2 2-2h.8v3.800h7.400v-3.800h.8q2 0 2 2v6.500z" fill="#f2f2f2"/><path d="M3.800 12.400h8.400" stroke="#343434" stroke-width="1.300"/></svg>
<svg style="left:1173px;top:182px" width="14" height="14" viewBox="0 0 14 14" ><rect x="3" y="0" width="8" height="3" fill="#f2f2f2"/><rect x="0" y="4" width="14" height="6" rx="1" fill="#f2f2f2"/><rect x="3" y="8" width="8" height="5.500" fill="#f2f2f2" stroke="#343434" stroke-width="1"/></svg>
<svg style="left:1172px;top:225px" width="16" height="15" viewBox="0 0 16 15" ><path d="M5 1.500h6l3.500 3.500v8h-9.500" fill="none" stroke="#f2f2f2" stroke-width="2" stroke-linejoin="round"/><path d="M5 1.500v3M5 11v2" stroke="#f2f2f2" stroke-width="2"/><path d="M10.500 2v3.500h3.500" fill="none" stroke="#f2f2f2" stroke-width="1.200"/><path d="M2 7.800h6" stroke="#27903a" stroke-width="2"/><path d="M6.500 4.600l4.200 3.200-4.200 3.200z" fill="#27903a"/></svg>
<svg style="left:1173px;top:254px" width="16" height="15" viewBox="0 0 16 15" ><path d="M1 1h6l3 3v3M10 12v2h-9z" fill="none" stroke="#f2f2f2" stroke-width="1.800" stroke-linejoin="round"/><path d="M1 1v13h9" fill="none" stroke="#f2f2f2" stroke-width="1.800"/><path d="M6 9.500h6" stroke="#27903a" stroke-width="2"/><path d="M11 6l4.500 3.500-4.500 3.500z" fill="#27903a"/></svg>
<svg style="left:1174px;top:300px" width="13" height="12" viewBox="0 0 13 12" ><g ><path d="M3.500 4h5a3.500 3.500 0 0 1 0 7h-2" fill="none" stroke="#f2f2f2" stroke-width="2"/><path d="M5 0l-5 4 5 4z" fill="#f2f2f2"/></g></svg>
<svg style="left:1174px;top:331px" width="13" height="12" viewBox="0 0 13 12" ><g transform="translate(13 0) scale(-1 1)"><path d="M3.500 4h5a3.500 3.500 0 0 1 0 7h-2" fill="none" stroke="#6a6a6a" stroke-width="2"/><path d="M5 0l-5 4 5 4z" fill="#6a6a6a"/></g></svg>
<svg style="left:1173px;top:372px" width="16" height="16" viewBox="0 0 16 16" ><rect x="0.500" y="0.500" width="10" height="10" fill="#f2f2f2"/><rect x="4.500" y="4.500" width="10.500" height="10.500" fill="#dcdcdc" stroke="#343434" stroke-width="1.200"/><rect x="5.800" y="5.800" width="8" height="8" fill="none" stroke="#fff" stroke-width="1.400"/></svg>
<svg style="left:1173px;top:403px" width="15" height="16" viewBox="0 0 15 16" ><path d="M3 0.500l7 10M12 0.500l-7 10" stroke="#f2f2f2" stroke-width="1.800"/><circle cx="3.500" cy="12.200" r="2.500" fill="none" stroke="#f2f2f2" stroke-width="1.700"/><circle cx="11.500" cy="12.200" r="2.500" fill="none" stroke="#f2f2f2" stroke-width="1.700"/></svg>
<svg style="left:1173px;top:433.5px" width="14" height="16" viewBox="0 0 14 16" ><rect x="1" y="2.500" width="12" height="12.500" fill="none" stroke="#f2f2f2" stroke-width="1.800"/><rect x="4" y="0.500" width="6" height="3.500" fill="#f2f2f2"/><rect x="3.800" y="6" width="6.400" height="6.500" fill="#cfcfcf"/></svg>
<svg style="left:1173px;top:477px" width="16" height="15" viewBox="0 0 16 15" ><circle cx="6.500" cy="6.500" r="5.600" fill="#5a5a5a" stroke="#f2f2f2" stroke-width="2"/><path d="M11 11l3.300 3" stroke="#f2f2f2" stroke-width="2.600" stroke-linecap="round"/><rect x="3.500" y="3.500" width="6" height="6" fill="none" stroke="#f2f2f2" stroke-width="1" stroke-dasharray="1 1"/></svg>
<svg style="left:1173px;top:507px" width="16" height="15" viewBox="0 0 16 15" ><circle cx="6.500" cy="6.500" r="5.600" fill="#f2f2f2" stroke="#f2f2f2" stroke-width="1.800"/><path d="M11 11l3.300 3" stroke="#f2f2f2" stroke-width="2.600" stroke-linecap="round"/><circle cx="5.500" cy="5.500" r="2.300" fill="#343434"/><rect x="5.500" y="5.500" width="4.500" height="4.500" fill="#343434" stroke="#f2f2f2" stroke-width=".8"/></svg>
<svg style="left:1178px;top:553px" width="6" height="12" viewBox="0 0 6 12" ><path d="M0.500 0l5 6-5 6z" fill="#f2f2f2"/></svg>
<div class="a" style="left:1px;top:578px;width:29px;height:29px;background:#fff"></div>
<svg style="left:1px;top:578px" width="29" height="29" viewBox="0 0 29 29" ><path d="M2.500 2.500l24 24M26.500 2.500l-24 24" stroke="#b02a3a" stroke-width="1.800"/></svg>
<div class="a" style="left:31px;top:578px;width:29px;height:29px;background:#000"></div>
<svg style="left:31px;top:578px" width="29" height="29" viewBox="0 0 29 29" ><circle cx="14.500" cy="14.500" r="8.500" fill="none" stroke="#cfcfcf" stroke-width="1.800"/></svg>
<div class="a" style="left:61px;top:578px;width:29px;height:29px;background:#808080"></div>
<svg style="left:61px;top:578px" width="29" height="29" viewBox="0 0 29 29" ><circle cx="14.500" cy="14.500" r="4.300" fill="#d8d8d8"/></svg>
<div class="a" style="left:91px;top:578px;width:28.500px;height:29px;background:#fff"></div>
<div class="a" style="left:120.00px;top:592.500px;width:14.93px;height:14.500px;background:#1a1a1a;border-left:1px solid rgba(20,20,20,.45)"></div>
<div class="a" style="left:134.93px;top:592.500px;width:14.93px;height:14.500px;background:#333333;border-left:1px solid rgba(20,20,20,.45)"></div>
<div class="a" style="left:149.87px;top:592.500px;width:14.93px;height:14.500px;background:#4d4d4d;border-left:1px solid rgba(20,20,20,.45)"></div>
<div class="a" style="left:164.80px;top:592.500px;width:14.93px;height:14.500px;background:#666666;border-left:1px solid rgba(20,20,20,.45)"></div>
<div class="a" style="left:179.73px;top:592.500px;width:14.93px;height:14.500px;background:#999999;border-left:1px solid rgba(20,20,20,.45)"></div>
<div class="a" style="left:194.66px;top:592.500px;width:14.93px;height:14.500px;background:#b3b3b3;border-left:1px solid rgba(20,20,20,.45)"></div>
<div class="a" style="left:209.60px;top:592.500px;width:14.93px;height:14.500px;background:#cccccc;border-left:1px solid rgba(20,20,20,.45)"></div>
<div class="a" style="left:224.53px;top:592.500px;width:14.93px;height:14.500px;background:#e6e6e6;border-left:1px solid rgba(20,20,20,.45)"></div>
<div class="a" style="left:239.46px;top:592.500px;width:14.93px;height:14.500px;background:#ececec;border-left:1px solid rgba(20,20,20,.45)"></div>
<div class="a" style="left:254.40px;top:592.500px;width:14.93px;height:14.500px;background:#f2f2f2;border-left:1px solid rgba(20,20,20,.45)"></div>
<div class="a" style="left:269.33px;top:592.500px;width:14.93px;height:14.500px;background:#ffffff;border-left:1px solid rgba(20,20,20,.45)"></div>
<div class="a" style="left:284.26px;top:592.500px;width:14.93px;height:14.500px;background:#800000;border-left:1px solid rgba(20,20,20,.45)"></div>
<div class="a" style="left:299.19px;top:592.500px;width:14.93px;height:14.500px;background:#ff0000;border-left:1px solid rgba(20,20,20,.45)"></div>
<div class="a" style="left:314.13px;top:592.500px;width:14.93px;height:14.500px;background:#808000;border-left:1px solid rgba(20,20,20,.45)"></div>
<div class="a" style="left:329.06px;top:592.500px;width:14.93px;height:14.500px;background:#ffff00;border-left:1px solid rgba(20,20,20,.45)"></div>
<div class="a" style="left:343.99px;top:592.500px;width:14.93px;height:14.500px;background:#008000;border-left:1px solid rgba(20,20,20,.45)"></div>
<div class="a" style="left:358.93px;top:592.500px;width:14.93px;height:14.500px;background:#00ff00;border-left:1px solid rgba(20,20,20,.45)"></div>
<div class="a" style="left:373.86px;top:592.500px;width:14.93px;height:14.500px;background:#008080;border-left:1px solid rgba(20,20,20,.45)"></div>
<div class="a" style="left:388.79px;top:592.500px;width:14.93px;height:14.500px;background:#00ffff;border-left:1px solid rgba(20,20,20,.45)"></div>
<div class="a" style="left:403.72px;top:592.500px;width:14.93px;height:14.500px;background:#000080;border-left:1px solid rgba(20,20,20,.45)"></div>
<div class="a" style="left:418.66px;top:592.500px;width:14.93px;height:14.500px;background:#0000ff;border-left:1px solid rgba(20,20,20,.45)"></div>
<div class="a" style="left:433.59px;top:592.500px;width:14.93px;height:14.500px;background:#800080;border-left:1px solid rgba(20,20,20,.45)"></div>
<div class="a" style="left:448.52px;top:592.500px;width:14.93px;height:14.500px;background:#ff00ff;border-left:1px solid rgba(20,20,20,.45)"></div>
<div class="a" style="left:463.46px;top:592.500px;width:14.93px;height:14.500px;background:#2b0000;border-left:1px solid rgba(20,20,20,.45)"></div>
<div class="a" style="left:478.39px;top:592.500px;width:14.93px;height:14.500px;background:#550000;border-left:1px solid rgba(20,20,20,.45)"></div>
<div class="a" style="left:493.32px;top:592.500px;width:14.93px;height:14.500px;background:#800000;border-left:1px solid rgba(20,20,20,.45)"></div>
<div class="a" style="left:508.25px;top:592.500px;width:14.93px;height:14.500px;background:#aa0000;border-left:1px solid rgba(20,20,20,.45)"></div>
<div class="a" style="left:523.19px;top:592.500px;width:14.93px;height:14.500px;background:#d40000;border-left:1px solid rgba(20,20,20,.45)"></div>
<div class="a" style="left:538.12px;top:592.500px;width:14.93px;height:14.500px;background:#ff0000;border-left:1px solid rgba(20,20,20,.45)"></div>
<div class="a" style="left:553.05px;top:592.500px;width:14.93px;height:14.500px;background:#ff2a2a;border-left:1px solid rgba(20,20,20,.45)"></div>
<div class="a" style="left:567.99px;top:592.500px;width:14.93px;height:14.500px;background:#ff5555;border-left:1px solid rgba(20,20,20,.45)"></div>
<div class="a" style="left:582.92px;top:592.500px;width:14.93px;height:14.500px;background:#ff8080;border-left:1px solid rgba(20,20,20,.45)"></div>
<div class="a" style="left:597.85px;top:592.500px;width:14.93px;height:14.500px;background:#ffaaaa;border-left:1px solid rgba(20,20,20,.45)"></div>
<div class="a" style="left:612.78px;top:592.500px;width:14.93px;height:14.500px;background:#ffd5d5;border-left:1px solid rgba(20,20,20,.45)"></div>
<div class="a" style="left:627.72px;top:592.500px;width:14.93px;height:14.500px;background:#280b0b;border-left:1px solid rgba(20,20,20,.45)"></div>
<div class="a" style="left:642.65px;top:592.500px;width:14.93px;height:14.500px;background:#501616;border-left:1px solid rgba(20,20,20,.45)"></div>
<div class="a" style="left:657.58px;top:592.500px;width:14.93px;height:14.500px;background:#782121;border-left:1px solid rgba(20,20,20,.45)"></div>
<div class="a" style="left:672.51px;top:592.500px;width:14.93px;height:14.500px;background:#a02c2c;border-left:1px solid rgba(20,20,20,.45)"></div>
<div class="a" style="left:687.45px;top:592.500px;width:14.93px;height:14.500px;background:#c83737;border-left:1px solid rgba(20,20,20,.45)"></div>
<div class="a" style="left:702.38px;top:592.500px;width:14.93px;height:14.500px;background:#d35f5f;border-left:1px solid rgba(20,20,20,.45)"></div>
<div class="a" style="left:717.31px;top:592.500px;width:14.93px;height:14.500px;background:#de8787;border-left:1px solid rgba(20,20,20,.45)"></div>
<div class="a" style="left:732.25px;top:592.500px;width:14.93px;height:14.500px;background:#e9afaf;border-left:1px solid rgba(20,20,20,.45)"></div>
<div class="a" style="left:747.18px;top:592.500px;width:14.93px;height:14.500px;background:#f4d7d7;border-left:1px solid rgba(20,20,20,.45)"></div>
<div class="a" style="left:762.11px;top:592.500px;width:14.93px;height:14.500px;background:#241c1c;border-left:1px solid rgba(20,20,20,.45)"></div>
<div class="a" style="left:777.04px;top:592.500px;width:14.93px;height:14.500px;background:#483737;border-left:1px solid rgba(20,20,20,.45)"></div>
<div class="a" style="left:791.98px;top:592.500px;width:14.93px;height:14.500px;background:#6c5353;border-left:1px solid rgba(20,20,20,.45)"></div>
<div class="a" style="left:806.91px;top:592.500px;width:14.93px;height:14.500px;background:#916f6f;border-left:1px solid rgba(20,20,20,.45)"></div>
<div class="a" style="left:821.84px;top:592.500px;width:14.93px;height:14.500px;background:#ac9393;border-left:1px solid rgba(20,20,20,.45)"></div>
<div class="a" style="left:836.78px;top:592.500px;width:14.93px;height:14.500px;background:#c8b7b7;border-left:1px solid rgba(20,20,20,.45)"></div>
<div class="a" style="left:851.71px;top:592.500px;width:14.93px;height:14.500px;background:#e3dbdb;border-left:1px solid rgba(20,20,20,.45)"></div>
<div class="a" style="left:866.64px;top:592.500px;width:14.93px;height:14.500px;background:#2b1100;border-left:1px solid rgba(20,20,20,.45)"></div>
<div class="a" style="left:881.57px;top:592.500px;width:14.93px;height:14.500px;background:#552200;border-left:1px solid rgba(20,20,20,.45)"></div>
<div class="a" style="left:896.51px;top:592.500px;width:14.93px;height:14.500px;background:#803300;border-left:1px solid rgba(20,20,20,.45)"></div>
<div class="a" style="left:911.44px;top:592.500px;width:14.93px;height:14.500px;background:#aa4400;border-left:1px solid rgba(20,20,20,.45)"></div>
<div class="a" style="left:926.37px;top:592.500px;width:14.93px;height:14.500px;background:#d45500;border-left:1px solid rgba(20,20,20,.45)"></div>
<div class="a" style="left:941.31px;top:592.500px;width:14.93px;height:14.500px;background:#ff6600;border-left:1px solid rgba(20,20,20,.45)"></div>
<div class="a" style="left:956.24px;top:592.500px;width:14.93px;height:14.500px;background:#ff7f2a;border-left:1px solid rgba(20,20,20,.45)"></div>
<div class="a" style="left:971.17px;top:592.500px;width:14.93px;height:14.500px;background:#ff9955;border-left:1px solid rgba(20,20,20,.45)"></div>
<div class="a" style="left:986.10px;top:592.500px;width:14.93px;height:14.500px;background:#ffb380;border-left:1px solid rgba(20,20,20,.45)"></div>
<div class="a" style="left:1001.04px;top:592.500px;width:14.93px;height:14.500px;background:#ffccaa;border-left:1px solid rgba(20,20,20,.45)"></div>
<div class="a" style="left:1015.97px;top:592.500px;width:14.93px;height:14.500px;background:#ffe6d5;border-left:1px solid rgba(20,20,20,.45)"></div>
<div class="a" style="left:1030.90px;top:592.500px;width:14.93px;height:14.500px;background:#28170b;border-left:1px solid rgba(20,20,20,.45)"></div>
<div class="a" style="left:1045.84px;top:592.500px;width:14.93px;height:14.500px;background:#502d16;border-left:1px solid rgba(20,20,20,.45)"></div>
<div class="a" style="left:1060.77px;top:592.500px;width:14.93px;height:14.500px;background:#784421;border-left:1px solid rgba(20,20,20,.45)"></div>
<div class="a" style="left:1075.70px;top:592.500px;width:14.93px;height:14.500px;background:#a05a2c;border-left:1px solid rgba(20,20,20,.45)"></div>
<div class="a" style="left:1090.63px;top:592.500px;width:14.93px;height:14.500px;background:#c87137;border-left:1px solid rgba(20,20,20,.45)"></div>
<div class="a" style="left:1105.57px;top:592.500px;width:14.93px;height:14.500px;background:#d38d5f;border-left:1px solid rgba(20,20,20,.45)"></div>
<svg style="left:1133.5px;top:588px" width="14" height="9" viewBox="0 0 14 9" ><path d="M1.500 7.500l5.500-5.500 5.500 5.500" fill="none" stroke="#f2f2f2" stroke-width="1.800"/></svg>
<svg style="left:1160.5px;top:587px" width="14" height="9" viewBox="0 0 14 9" ><path d="M1.500 1l5.500 5.500 5.500-5.500" fill="none" stroke="#f2f2f2" stroke-width="1.800"/></svg>
<div class="a" style="left:1181.500px;top:584px;width:16.500px;height:24px;background:#222;border:1px solid #3f3f3f;border-radius:4px"></div>
<svg style="left:1184px;top:589px" width="12" height="13" viewBox="0 0 12 13" ><path d="M0 2.300h11.500M0 6.800h11.500M0 11.300h11.500" stroke="#f2f2f2" stroke-width="1.800"/></svg>
<div class="t" style="left:18.00px;top:610px;transform:scaleX(0.8043);transform-origin:0 0;">Fill:</div>
<div class="t" style="left:38.00px;top:610px;transform:scaleX(0.8148);transform-origin:0 0;"><b>a</b></div>
<div class="t" style="left:2.00px;top:624.5px;transform:scaleX(0.8158);transform-origin:0 0;">Stroke:</div>
<div class="t" style="left:36.00px;top:624.5px;transform:scaleX(0.7981);transform-origin:0 0;"><b>m</b></div>
<div class="a" style="left:48px;top:609.500px;width:43px;height:13px;background:#808080;border-radius:2px 2px 0 0"></div>
<div class="a" style="left:48px;top:624px;width:43px;height:13px;background:#000"></div>
<div class="t" style="left:100.00px;top:624.5px;transform:scaleX(0.7987);transform-origin:0 0;">0.265</div>
<div class="t" style="left:131.00px;top:617px;transform:scaleX(0.7115);transform-origin:0 0;">O:</div>
<div class="box" style="left:143px;top:608.500px;width:62.500px;height:34px"></div>
<div class="t" style="left:149.00px;top:617px;transform:scaleX(0.8000);transform-origin:0 0;">100</div>
<svg style="left:177px;top:619px" width="26" height="11" viewBox="0 0 26 11" ><path d="M0 5.500h10.5" stroke="#fff" stroke-width="1.500"/><path d="M15 5.500h10.5M20.25 0.250v10.5" stroke="#5a5a5a" stroke-width="1.500" fill="none"/></svg>
<div class="a" style="left:228.700px;top:615.700px;width:3.200px;height:15.600px;background:#4a80d4;border-radius:1px"></div>
<div class="t" style="left:237.00px;top:617px;transform:scaleX(0.7990);transform-origin:0 0;">Layer 1</div>
<svg style="left:288px;top:617px" width="13" height="12" viewBox="0 0 13 12" ><path d="M1 7Q6.500 1.200 12 7Q6.500 12 1 7z" fill="none" stroke="#f4f4f4" stroke-width="2"/><circle cx="6.500" cy="6.800" r="2.100" fill="#f4f4f4"/><path d="M3 3l-1.200-1.800M6.500 2.200v-2M10 3l1.200-1.800" stroke="#f4f4f4" stroke-width="1.600"/></svg>
<svg style="left:320.5px;top:617px" width="13" height="13" viewBox="0 0 13 13" ><rect x="0.500" y="6" width="8.500" height="6.500" rx="0.800" fill="#f2f2f2"/><path d="M6.800 6V3.500a2.300 2.300 0 0 1 4.600 0V5.500" fill="none" stroke="#f2f2f2" stroke-width="1.600"/></svg>
<div class="t" style="left:348.50px;top:617px;transform:scaleX(0.8627);transform-origin:0 0;"><b>2</b> objects selected of types <b>Circle</b>, <b>Text</b> in layer <b>Layer 1</b>. Click selection again to toggle scale/rotation handles.</div>
<div class="t" style="left:947.00px;top:609.5px;transform:scaleX(0.7048);transform-origin:0 0;">X:</div>
<div class="t" style="left:947.00px;top:624.5px;transform:scaleX(0.7009);transform-origin:0 0;">Y:</div>
<div class="t" style="left:970.50px;top:609.5px;transform:scaleX(0.8153);transform-origin:0 0;">82.27</div>
<div class="t" style="left:966.50px;top:624.5px;transform:scaleX(0.8370);transform-origin:0 0;">-48.43</div>
<div class="t" style="left:1004.00px;top:617px;transform:scaleX(0.7512);transform-origin:0 0;">Z:</div>
<div class="box" style="left:1013px;top:608.500px;width:76px;height:34px"></div>
<div class="t" style="left:1022.50px;top:617px;transform:scaleX(0.8542);transform-origin:0 0;">45%</div>
<svg style="left:1054.5px;top:619px" width="26" height="11" viewBox="0 0 26 11" ><path d="M0 5.500h10.5" stroke="#fff" stroke-width="1.500"/><path d="M15 5.500h10.5M20.25 0.250v10.5" stroke="#fff" stroke-width="1.500" fill="none"/></svg>
<div class="t" style="left:1098.00px;top:617px;transform:scaleX(0.6667);transform-origin:0 0;">R:</div>
<div class="box" style="left:1107px;top:608.500px;width:82px;height:34px"></div>
<div class="t" style="left:1118.00px;top:617px;transform:scaleX(0.9059);transform-origin:0 0;">0.00°</div>
<svg style="left:1153.5px;top:619px" width="26" height="11" viewBox="0 0 26 11" ><path d="M0 5.500h10.5" stroke="#fff" stroke-width="1.500"/><path d="M15 5.500h10.5M20.25 0.250v10.5" stroke="#fff" stroke-width="1.500" fill="none"/></svg>
</body></html>
